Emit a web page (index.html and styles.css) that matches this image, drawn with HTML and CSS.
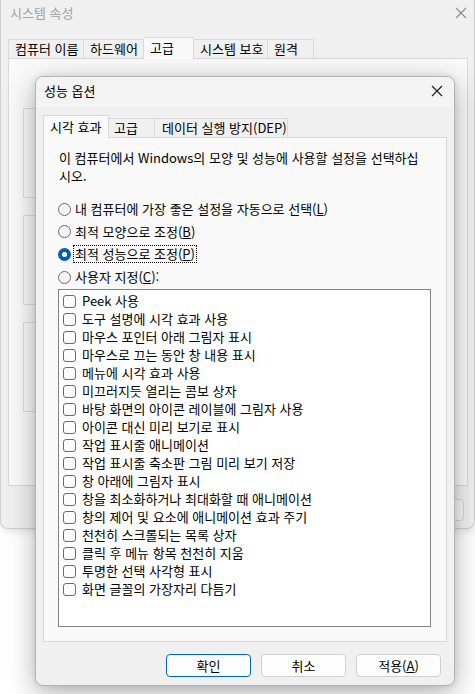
FILE: index.html
```html
<!DOCTYPE html>
<html lang="ko">
<head>
<meta charset="utf-8">
<title>성능 옵션</title>
<link rel="stylesheet" href="styles.css">
</head>
<body>
<div class="bgwin">
  <div class="bg-titlebar">
    <span class="bg-title">시스템 속성</span>
    <svg class="bg-close" width="12" height="12" viewBox="0 0 12 12"><path d="M1 1L11 11M11 1L1 11" stroke="#8c8c8c" stroke-width="1.1"/></svg>
  </div>
  <div class="bg-body">
    <div class="bg-tabs">
      <span class="bg-tab w76">컴퓨터 이름</span>
      <span class="bg-tab w60">하드웨어</span>
      <span class="bg-tab sel w50">고급</span>
      <span class="bg-tab w74">시스템 보호</span>
      <span class="bg-tab w46">원격</span>
    </div>
    <div class="bg-panel">
      <div class="bg-group"></div>
      <div class="bg-group"></div>
      <div class="bg-group"></div>
    </div>
    <div class="bg-buttons">
      <span class="bg-btn"></span>
      <span class="bg-btn"></span>
      <span class="bg-btn"></span>
    </div>
  </div>
</div>

<div class="dialog">
  <div class="titlebar">
    <span class="title">성능 옵션</span>
    <svg class="close" width="12" height="12" viewBox="0 0 12 12"><path d="M1 1L11 11M11 1L1 11" stroke="#1a1a1a" stroke-width="1.1"/></svg>
  </div>
  <div class="body">
    <div class="tabs">
      <span class="tab sel t1">시각 효과</span>
      <span class="tab t2">고급</span>
      <span class="tab t3">데이터 실행 방지(DEP)</span>
    </div>
    <div class="panel">
      <p class="desc">이 컴퓨터에서 Windows의 모양 및 성능에 사용할 설정을 선택하십<br>시오.</p>
      <div class="radios">
        <div class="radio-row"><span class="radio"></span><span class="rlabel">내 컴퓨터에 가장 좋은 설정을 자동으로 선택(<u>L</u>)</span></div>
        <div class="radio-row"><span class="radio"></span><span class="rlabel">최적 모양으로 조정(<u>B</u>)</span></div>
        <div class="radio-row"><span class="radio on"></span><span class="rlabel focus">최적 성능으로 조정(<u>P</u>)</span></div>
        <div class="radio-row"><span class="radio"></span><span class="rlabel">사용자 지정(<u>C</u>):</span></div>
      </div>
      <div class="listbox">
        <div class="item"><span class="cb"></span><span>Peek 사용</span></div>
        <div class="item"><span class="cb"></span><span>도구 설명에 시각 효과 사용</span></div>
        <div class="item"><span class="cb"></span><span>마우스 포인터 아래 그림자 표시</span></div>
        <div class="item"><span class="cb"></span><span>마우스로 끄는 동안 창 내용 표시</span></div>
        <div class="item"><span class="cb"></span><span>메뉴에 시각 효과 사용</span></div>
        <div class="item"><span class="cb"></span><span>미끄러지듯 열리는 콤보 상자</span></div>
        <div class="item"><span class="cb"></span><span>바탕 화면의 아이콘 레이블에 그림자 사용</span></div>
        <div class="item"><span class="cb"></span><span>아이콘 대신 미리 보기로 표시</span></div>
        <div class="item"><span class="cb"></span><span>작업 표시줄 애니메이션</span></div>
        <div class="item"><span class="cb"></span><span>작업 표시줄 축소판 그림 미리 보기 저장</span></div>
        <div class="item"><span class="cb"></span><span>창 아래에 그림자 표시</span></div>
        <div class="item"><span class="cb"></span><span>창을 최소화하거나 최대화할 때 애니메이션</span></div>
        <div class="item"><span class="cb"></span><span>창의 제어 및 요소에 애니메이션 효과 주기</span></div>
        <div class="item"><span class="cb"></span><span>천천히 스크롤되는 목록 상자</span></div>
        <div class="item"><span class="cb"></span><span>클릭 후 메뉴 항목 천천히 지움</span></div>
        <div class="item"><span class="cb"></span><span>투명한 선택 사각형 표시</span></div>
        <div class="item"><span class="cb"></span><span>화면 글꼴의 가장자리 다듬기</span></div>
      </div>
    </div>
    <div class="buttons">
      <span class="btn default">확인</span>
      <span class="btn">취소</span>
      <span class="btn">적용(<u>A</u>)</span>
    </div>
  </div>
</div>
</body>
</html>
```

FILE: styles.css
```css
html, body {
  margin: 0;
  padding: 0;
}
body {
  width: 475px;
  height: 694px;
  overflow: hidden;
  position: relative;
  background: #ffffff;
  font-family: "Noto Sans CJK KR", sans-serif;
  font-size: 13px;
  color: #000;
}
p { margin: 0; }
u { text-underline-offset: 1px; }

/* background window */
.bgwin {
  width: 475px;
  height: 529px;
  box-sizing: border-box;
  background: #f0f0f0;
  border: 1px solid #cfcfcf;
  border-top: none;
  border-radius: 0 0 8px 8px;
  box-shadow: 0 2px 8px rgba(0,0,0,0.12);
  display: flex;
  flex-direction: column;
}
.bg-titlebar {
  height: 26px;
  display: flex;
  align-items: center;
  justify-content: space-between;
  padding: 0 7px 0 9px;
}
.bg-title {
  color: #a3a3a3;
  line-height: 16px;
}
.bg-close { display: block; }
.bg-body {
  padding: 11px 6px 0 7px;
  display: flex;
  flex-direction: column;
}
.bg-tabs {
  display: flex;
  align-items: flex-end;
  height: 21px;
  position: relative;
  z-index: 1;
}
.bg-tab {
  box-sizing: border-box;
  height: 19px;
  border: 1px solid #d9d9d9;
  border-bottom: none;
  border-left: none;
  background: #f0f0f0;
  padding-left: 6px;
  line-height: 18px;
  white-space: nowrap;
}
.bg-tab:first-child { border-left: 1px solid #d9d9d9; }
.bg-tab.sel {
  height: 22px;
  background: #f9f9f9;
  margin-bottom: -1px;
  line-height: 19px;
}
.w76 { width: 76px; }
.w60 { width: 60px; }
.w50 { width: 50px; }
.w74 { width: 74px; }
.w46 { width: 46px; }
.bg-panel {
  height: 428px;
  box-sizing: border-box;
  border: 1px solid #d9d9d9;
  background: #f9f9f9;
  padding: 49px 14px 0 14px;
  display: flex;
  flex-direction: column;
  gap: 17px;
}
.bg-group {
  height: 90px;
  box-sizing: border-box;
  border: 1px solid #dcdcdc;
}
.bg-buttons {
  margin-top: 13px;
  display: flex;
  justify-content: flex-end;
  gap: 7px;
  padding-right: 4px;
}
.bg-btn {
  box-sizing: border-box;
  width: 75px;
  height: 22px;
  border: 1px solid #d6d6d6;
  border-radius: 4px;
  background: #f5f5f5;
}

/* dialog */
.dialog {
  position: absolute;
  left: 35px;
  top: 76px;
  width: 420px;
  height: 610px;
  box-sizing: border-box;
  border: 1px solid #b4b4b4;
  border-radius: 8px;
  background: #f0f0f0;
  box-shadow: 0 8px 28px rgba(0,0,0,0.30), 0 0 6px rgba(0,0,0,0.10);
  overflow: hidden;
  display: flex;
  flex-direction: column;
}
.titlebar {
  height: 30px;
  flex: none;
  background: #f3f3f3;
  display: flex;
  align-items: center;
  justify-content: space-between;
  padding: 0 11px 0 8px;
}
.title {
  line-height: 16px;
  margin-top: -2px;
}
.close { display: block; margin-top: -2px; }
.body {
  padding: 8px 7px 0 7px;
  display: flex;
  flex-direction: column;
}
.tabs {
  display: flex;
  align-items: flex-end;
  height: 22px;
  position: relative;
  z-index: 1;
}
.tab {
  box-sizing: border-box;
  height: 19px;
  border: 1px solid #d9d9d9;
  border-bottom: none;
  border-left: none;
  background: #f0f0f0;
  line-height: 18px;
  white-space: nowrap;
}
.tab.sel {
  height: 23px;
  border-left: 1px solid #d9d9d9;
  background: #f9f9f9;
  margin-bottom: -1px;
  line-height: 21px;
}
.t1 { width: 66px; padding-left: 6px; }
.t2 { width: 46px; padding-left: 5px; }
.t3 { width: 133px; padding-left: 7px; }
.panel {
  height: 505px;
  box-sizing: border-box;
  border: 1px solid #d9d9d9;
  background: #f9f9f9;
  padding: 11px 13px 0 14px;
  display: flex;
  flex-direction: column;
}
.desc {
  line-height: 18px;
  margin-left: 1px;
}
.radios {
  margin-top: 13px;
  display: flex;
  flex-direction: column;
}
.radio-row {
  height: 22.6px;
  display: flex;
  align-items: center;
  gap: 3px;
}
.radio {
  width: 13px;
  height: 13px;
  box-sizing: border-box;
  border: 1px solid #6a6a6a;
  border-radius: 50%;
  background: #f4f4f4;
  flex: none;
}
.radio.on {
  border: none;
  background: radial-gradient(circle, #ffffff 0 2.4px, #005fb8 2.9px);
}
.rlabel {
  line-height: 14px;
  padding: 1px 1px;
  white-space: nowrap;
}
.rlabel.focus {
  outline: 1px dotted #000;
  outline-offset: 0;
}
.listbox {
  margin-top: 1px;
  width: 373px;
  height: 338px;
  box-sizing: border-box;
  border: 1px solid #838383;
  background: #ffffff;
  padding: 2px 4px 0 4px;
  display: flex;
  flex-direction: column;
}
.item {
  height: 18px;
  display: flex;
  align-items: center;
  gap: 6px;
  line-height: 16px;
  white-space: nowrap;
}
.cb {
  width: 13px;
  height: 13px;
  box-sizing: border-box;
  border: 1px solid #6a6a6a;
  border-radius: 3px;
  background: #fdfdfd;
  flex: none;
}
.buttons {
  margin-top: 12px;
  display: flex;
  justify-content: flex-end;
  gap: 10px;
  padding-right: 6px;
}
.btn {
  box-sizing: border-box;
  width: 85px;
  height: 23px;
  border: 1px solid #d0d0d0;
  border-radius: 4px;
  background: #fdfdfd;
  text-align: center;
  line-height: 21px;
}
.btn.default {
  border-color: #0067c0;
}
```
